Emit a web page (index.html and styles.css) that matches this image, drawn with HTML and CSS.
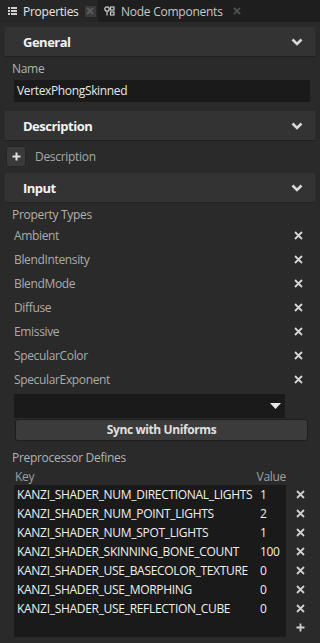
FILE: index.html
```html
<!DOCTYPE html>
<html>
<head>
<meta charset="utf-8">
<link rel="stylesheet" href="styles.css">
</head>
<body>
<div class="tabs">
  <div class="tab active">
    <svg class="tab-icon" width="9" height="8" viewBox="0 0 9 8"><g fill="#d0d0d0"><rect x="0" y="0" width="2" height="2"/><rect x="3" y="0" width="6" height="2"/><rect x="0" y="3" width="2" height="2"/><rect x="3" y="3" width="6" height="2"/><rect x="0" y="6" width="2" height="2"/><rect x="3" y="6" width="6" height="2"/></g></svg>
    <span class="tab-title">Properties</span>
    <span class="tab-close boxed"><svg width="8" height="8" viewBox="0 0 8 8"><path d="M1 1L7 7M7 1L1 7" stroke="#5a5a5a" stroke-width="2"/></svg></span>
  </div>
  <div class="tab">
    <svg class="tab-icon" width="11" height="10" viewBox="0 0 11 10"><circle cx="3" cy="3" r="2.2" fill="none" stroke="#c8c8c8" stroke-width="1.3"/><rect x="2.4" y="5.5" width="1.2" height="4" fill="#c8c8c8"/><rect x="6.5" y="1" width="3.5" height="3" fill="none" stroke="#c8c8c8" stroke-width="1.2"/><rect x="6.5" y="6" width="3.5" height="3" fill="none" stroke="#c8c8c8" stroke-width="1.2"/></svg>
    <span class="tab-title">Node Components</span>
    <span class="tab-close"><svg width="8" height="8" viewBox="0 0 8 8"><path d="M1 1L7 7M7 1L1 7" stroke="#4e4e4e" stroke-width="2"/></svg></span>
  </div>
</div>

<div class="panel">
  <div class="section-header header-general"><span>General</span><svg class="chev" width="12" height="8" viewBox="0 0 12 8"><path d="M1.5 1.5L6 6L10.5 1.5" fill="none" stroke="#d8d8d8" stroke-width="2.6"/></svg></div>
  <div class="label label-name">Name</div>
  <div class="text-input">VertexPhongSkinned</div>

  <div class="section-header header-desc"><span>Description</span><svg class="chev" width="12" height="8" viewBox="0 0 12 8"><path d="M1.5 1.5L6 6L10.5 1.5" fill="none" stroke="#d8d8d8" stroke-width="2.6"/></svg></div>
  <div class="desc-row">
    <span class="plus-btn"><svg width="9" height="9" viewBox="0 0 9 9"><path d="M4.5 0.5V8.5M0.5 4.5H8.5" stroke="#e0e0e0" stroke-width="2"/></svg></span>
    <span class="desc-text">Description</span>
  </div>

  <div class="section-header header-input"><span>Input</span><svg class="chev" width="12" height="8" viewBox="0 0 12 8"><path d="M1.5 1.5L6 6L10.5 1.5" fill="none" stroke="#d8d8d8" stroke-width="2.6"/></svg></div>
  <div class="label label-ptypes">Property Types</div>
  <div class="ptype-list">
    <div class="ptype"><span>Ambient</span><svg class="x" width="9" height="9" viewBox="0 0 9 9"><path d="M1 1L8 8M8 1L1 8" stroke="#d4d4d4" stroke-width="1.8"/></svg></div>
    <div class="ptype"><span>BlendIntensity</span><svg class="x" width="9" height="9" viewBox="0 0 9 9"><path d="M1 1L8 8M8 1L1 8" stroke="#d4d4d4" stroke-width="1.8"/></svg></div>
    <div class="ptype"><span>BlendMode</span><svg class="x" width="9" height="9" viewBox="0 0 9 9"><path d="M1 1L8 8M8 1L1 8" stroke="#d4d4d4" stroke-width="1.8"/></svg></div>
    <div class="ptype"><span>Diffuse</span><svg class="x" width="9" height="9" viewBox="0 0 9 9"><path d="M1 1L8 8M8 1L1 8" stroke="#d4d4d4" stroke-width="1.8"/></svg></div>
    <div class="ptype"><span>Emissive</span><svg class="x" width="9" height="9" viewBox="0 0 9 9"><path d="M1 1L8 8M8 1L1 8" stroke="#d4d4d4" stroke-width="1.8"/></svg></div>
    <div class="ptype"><span>SpecularColor</span><svg class="x" width="9" height="9" viewBox="0 0 9 9"><path d="M1 1L8 8M8 1L1 8" stroke="#d4d4d4" stroke-width="1.8"/></svg></div>
    <div class="ptype"><span>SpecularExponent</span><svg class="x" width="9" height="9" viewBox="0 0 9 9"><path d="M1 1L8 8M8 1L1 8" stroke="#d4d4d4" stroke-width="1.8"/></svg></div>
  </div>
  <div class="dropdown"><svg width="11" height="6" viewBox="0 0 11 6"><path d="M0 0H11L5.5 6Z" fill="#e8e8e8"/></svg></div>
  <div class="sync-btn">Sync with Uniforms</div>

  <div class="label label-pre">Preprocessor Defines</div>
  <div class="kv-head"><span class="kv-key-h">Key</span><span class="kv-val-h">Value</span></div>
  <div class="kv-wrap">
    <div class="kv-table">
      <div class="kv-row"><span class="k">KANZI_SHADER_NUM_DIRECTIONAL_LIGHTS</span><span class="v">1</span></div>
      <div class="kv-row"><span class="k">KANZI_SHADER_NUM_POINT_LIGHTS</span><span class="v">2</span></div>
      <div class="kv-row"><span class="k">KANZI_SHADER_NUM_SPOT_LIGHTS</span><span class="v">1</span></div>
      <div class="kv-row"><span class="k">KANZI_SHADER_SKINNING_BONE_COUNT</span><span class="v">100</span></div>
      <div class="kv-row"><span class="k">KANZI_SHADER_USE_BASECOLOR_TEXTURE</span><span class="v">0</span></div>
      <div class="kv-row"><span class="k">KANZI_SHADER_USE_MORPHING</span><span class="v">0</span></div>
      <div class="kv-row"><span class="k">KANZI_SHADER_USE_REFLECTION_CUBE</span><span class="v">0</span></div>
    </div>
    <div class="kv-actions">
      <div class="act"><svg width="9" height="9" viewBox="0 0 9 9"><path d="M1 1L8 8M8 1L1 8" stroke="#cfcfcf" stroke-width="1.8"/></svg></div>
      <div class="act"><svg width="9" height="9" viewBox="0 0 9 9"><path d="M1 1L8 8M8 1L1 8" stroke="#cfcfcf" stroke-width="1.8"/></svg></div>
      <div class="act"><svg width="9" height="9" viewBox="0 0 9 9"><path d="M1 1L8 8M8 1L1 8" stroke="#cfcfcf" stroke-width="1.8"/></svg></div>
      <div class="act"><svg width="9" height="9" viewBox="0 0 9 9"><path d="M1 1L8 8M8 1L1 8" stroke="#cfcfcf" stroke-width="1.8"/></svg></div>
      <div class="act"><svg width="9" height="9" viewBox="0 0 9 9"><path d="M1 1L8 8M8 1L1 8" stroke="#cfcfcf" stroke-width="1.8"/></svg></div>
      <div class="act"><svg width="9" height="9" viewBox="0 0 9 9"><path d="M1 1L8 8M8 1L1 8" stroke="#cfcfcf" stroke-width="1.8"/></svg></div>
      <div class="act"><svg width="9" height="9" viewBox="0 0 9 9"><path d="M1 1L8 8M8 1L1 8" stroke="#cfcfcf" stroke-width="1.8"/></svg></div>
      <div class="act"><svg width="9" height="9" viewBox="0 0 9 9"><path d="M4.5 0.5V8.5M0.5 4.5H8.5" stroke="#cfcfcf" stroke-width="1.8"/></svg></div>
    </div>
  </div>
</div>
</body>
</html>
```
FILE: styles.css
```css
* { box-sizing: border-box; }
html, body { margin: 0; padding: 0; }
body {
  width: 320px;
  height: 643px;
  overflow: hidden;
  background: #2a2a2a;
  font-family: "Open Sans", "Noto Sans", sans-serif;
  font-size: 12px;
  color: #b0b0b0;
}
.tabs {
  display: flex;
  height: 22px;
  background: #1e1e1e;
}
.tab {
  display: flex;
  align-items: center;
  height: 22px;
  color: #c8c8c8;
  font-size: 12px;
  letter-spacing: -0.25px;
}
.tab.active {
  width: 98px;
  background: #262626;
  padding-left: 8px;
  color: #e6e6e6;
}
.tab:not(.active) { padding-left: 6px; }
.tab-icon { flex: none; margin-right: 6px; }
.tab-title { white-space: nowrap; }
.tab.active .tab-close { margin-left: 6px; }
.tab:not(.active) .tab-close { margin-left: 9px; }
.tab-close {
  display: flex;
  align-items: center;
  justify-content: center;
  width: 10px;
  height: 10px;
}
.tab-close.boxed { background: #3a3a3a; width: 11px; height: 11px; }

.panel {
  padding: 5px 5px 0 5px;
  display: flex;
  flex-direction: column;
}
.section-header {
  height: 30px;
  background: #333333;
  border-bottom: 1px solid #1f1f1f;
  display: flex;
  align-items: center;
  justify-content: space-between;
  padding: 0 12px 0 18px;
  color: #f2f2f2;
  font-weight: bold;
  font-size: 13px;
  letter-spacing: -0.5px;
}
.chev { flex: none; }
.label {
  height: 20px;
  line-height: 20px;
  padding-left: 7px;
  color: #b2b2b2;
  letter-spacing: -0.3px;
}
.label-name { margin-top: 2px; height: 21px; }
.text-input {
  margin: 0 5px 0 9px;
  height: 22px;
  background: #1a1a1a;
  color: #e8e8e8;
  line-height: 22px;
  padding-left: 3px;
  letter-spacing: -0.35px;
}
.header-desc { margin-top: 9px; }
.desc-row {
  display: flex;
  align-items: center;
  height: 21px;
  margin-top: 5px;
}
.plus-btn {
  width: 20px;
  height: 21px;
  margin-left: 1px;
  background: #3a3a3a;
  border-radius: 3px;
  border: 1px solid #262626;
  display: flex;
  align-items: center;
  justify-content: center;
}
.desc-text { margin-left: 9px; color: #a8a8a8; letter-spacing: -0.3px; }
.header-input { margin-top: 6px; }
.label-ptypes { margin-top: 4px; height: 16px; line-height: 16px; }
.ptype-list { display: flex; flex-direction: column; }
.ptype {
  height: 24px;
  display: flex;
  align-items: center;
  justify-content: space-between;
  padding: 0 12px 0 9px;
  color: #ababab;
  letter-spacing: -0.35px;
}
.dropdown {
  margin: 3px 0 0 9px;
  width: 271px;
  height: 24px;
  background: #1a1a1a;
  display: flex;
  align-items: center;
  justify-content: flex-end;
  padding-right: 4px;
}
.sync-btn {
  margin: 1px 7px 0 10px;
  height: 22px;
  background: #3b3b3b;
  border: 1px solid #1e1e1e;
  border-radius: 3px;
  color: #e0e0e0;
  font-weight: bold;
  text-align: center;
  line-height: 20px;
  letter-spacing: -0.4px;
}
.label-pre { margin-top: 7px; }
.kv-head {
  height: 17px;
  display: flex;
  align-items: center;
  color: #a0a0a0;
  letter-spacing: -0.3px;
}
.kv-key-h { margin-left: 10px; }
.kv-val-h { margin-left: auto; margin-right: 29px; }
.kv-wrap { display: flex; }
.kv-table {
  margin-left: 9px;
  width: 272px;
  height: 152px;
  background: #1a1a1a;
  padding-left: 3px;
}
.kv-row {
  height: 19px;
  display: flex;
  align-items: center;
  color: #f0f0f0;
  letter-spacing: -0.3px;
  white-space: nowrap;
}
.kv-row .k { width: 243px; overflow: hidden; }
.kv-row .v { letter-spacing: -0.3px; }
.kv-actions {
  display: flex;
  flex-direction: column;
  margin-left: 6px;
  width: 16px;
}
.act {
  height: 19px;
  display: flex;
  align-items: center;
  justify-content: center;
}
```
